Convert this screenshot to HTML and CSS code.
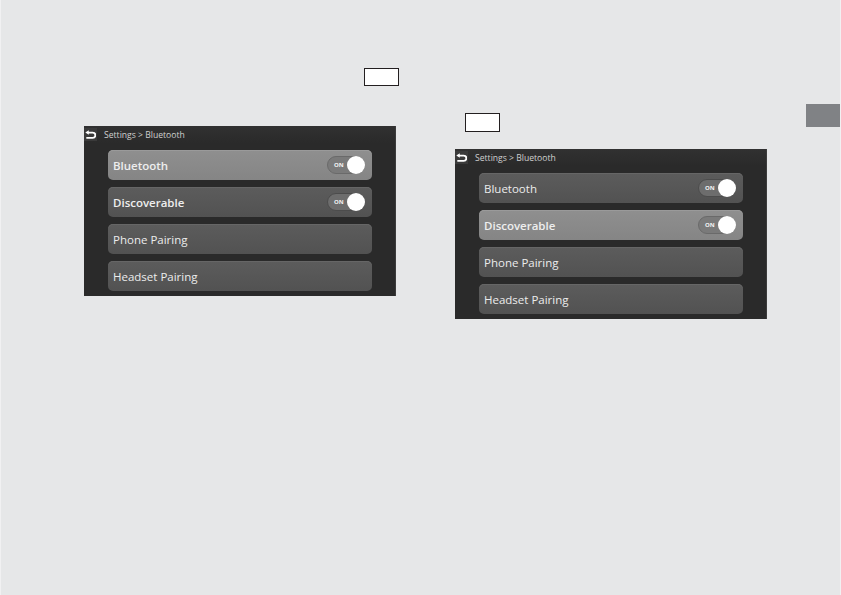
FILE: index.html
```html
<!DOCTYPE html>
<html lang="en">
<head>
<meta charset="utf-8">
<title>Bluetooth settings</title>
<link rel="stylesheet" href="styles.css">
</head>
<body>
<div class="page">
  <section class="col col-left">
    <div class="keybox"></div>
    <div class="screen">
      <div class="crumbs">
        <span class="back">
          <svg width="11" height="9" viewBox="0 0 10 8"><path d="M3.4 0.1 L0.3 2.2 L3.4 4.3 Z" fill="#fff"/><path d="M2.6 2.2 H7 A2.4 2.4 0 0 1 7 7 H1.2" fill="none" stroke="#fff" stroke-width="1.6"/></svg>
        </span>
        <span class="path">Settings &gt; Bluetooth</span>
      </div>
      <ul class="list">
        <li class="item item-on strong">Bluetooth<span class="toggle"><span class="on">ON</span><span class="knob"></span></span></li>
        <li class="item strong">Discoverable<span class="toggle"><span class="on">ON</span><span class="knob"></span></span></li>
        <li class="item">Phone Pairing</li>
        <li class="item">Headset Pairing</li>
      </ul>
    </div>
  </section>
  <section class="col col-right">
    <div class="keybox"></div>
    <div class="screen">
      <div class="crumbs">
        <span class="back">
          <svg width="11" height="9" viewBox="0 0 10 8"><path d="M3.4 0.1 L0.3 2.2 L3.4 4.3 Z" fill="#fff"/><path d="M2.6 2.2 H7 A2.4 2.4 0 0 1 7 7 H1.2" fill="none" stroke="#fff" stroke-width="1.6"/></svg>
        </span>
        <span class="path">Settings &gt; Bluetooth</span>
      </div>
      <ul class="list">
        <li class="item">Bluetooth<span class="toggle"><span class="on">ON</span><span class="knob"></span></span></li>
        <li class="item item-on strong">Discoverable<span class="toggle"><span class="on">ON</span><span class="knob"></span></span></li>
        <li class="item">Phone Pairing</li>
        <li class="item">Headset Pairing</li>
      </ul>
    </div>
  </section>
  <div class="tab"></div>
</div>
</body>
</html>
```
FILE: styles.css
```css
html, body {
  margin: 0;
  padding: 0;
}

body {
  background: #e6e7e8;
  font-family: "Open Sans", "Liberation Sans", sans-serif;
  width: 841px;
  height: 595px;
  overflow: hidden;
  border-left: 1px solid #f1f1f2;
  border-right: 1px solid #f1f1f2;
  box-sizing: border-box;
}

.page {
  display: flex;
  align-items: flex-start;
  padding-left: 83px;
}

.col {
  display: flex;
  flex-direction: column;
  width: 315px;
}

.col-left {
  padding-top: 68px;
}

.col-left .keybox {
  align-self: flex-end;
}

.col-left .screen {
  margin-top: 40px;
}

.col-right {
  margin-left: 56px;
  padding-top: 113px;
}

.col-right .keybox {
  margin-left: 10px;
  height: 19px;
}

.col-right .screen {
  margin-top: 17px;
}

.keybox {
  width: 35px;
  height: 18px;
  box-sizing: border-box;
  border: 1.5px solid #231f20;
  background: #fff;
}

.screen {
  width: 312px;
  height: 170px;
  box-sizing: border-box;
  background: #2a2a2a;
  border-right: 1px solid #3c3c3c;
  padding: 0 23px 0 24px;
}

.crumbs {
  height: 17px;
  margin: 0 -23px 7px -24px;
  display: flex;
  align-items: center;
  background: linear-gradient(#313131, #2a2a2a);
}

.back {
  width: 13px;
  height: 13px;
  display: flex;
  align-items: center;
  justify-content: center;
  background: #3a3a3a;
  margin-top: -1px;
}

.path {
  margin-left: 7px;
  font-size: 8.6px;
  color: #d0d0d0;
}

.list {
  list-style: none;
  margin: 0;
  padding: 0;
  display: flex;
  flex-direction: column;
  gap: 7px;
}

.item {
  height: 30px;
  box-sizing: border-box;
  border-radius: 5px;
  background: linear-gradient(#5c5c5c, #525252);
  box-shadow: inset 0 1px 0 #666;
  color: #ececec;
  font-size: 11.5px;
  padding: 0 7px 0 5px;
  display: flex;
  align-items: center;
  justify-content: space-between;
}

.item-on {
  background: linear-gradient(#8f8f8f, #858585);
  box-shadow: inset 0 1px 0 #9a9a9a;
}

.strong {
  font-weight: 600;
  color: #eeeeee;
}

.toggle {
  width: 38px;
  height: 18px;
  box-sizing: border-box;
  border-radius: 9px;
  background: #6d6d6d;
  border: 1px solid #4c4c4c;
  display: flex;
  align-items: center;
  justify-content: space-between;
  padding-left: 6px;
}

.item-on .toggle {
  background: #7a7a7a;
  border-color: #6a6a6a;
}

.on {
  font-size: 6px;
  font-weight: 700;
  color: #f4f4f4;
}

.knob {
  width: 18px;
  height: 18px;
  margin-right: -1px;
  border-radius: 50%;
  background: #fff;
}

.tab {
  margin-left: auto;
  margin-top: 104px;
  width: 34px;
  height: 23px;
  background: #808285;
}
```
